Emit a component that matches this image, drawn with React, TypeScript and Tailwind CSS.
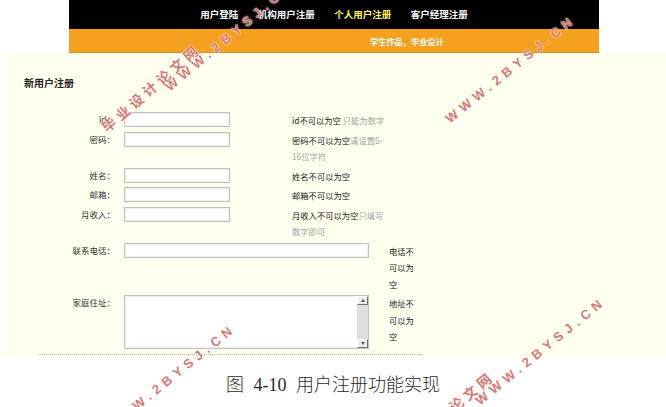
import type { ReactNode } from 'react'

function Hint({ children }: { children: ReactNode }) {
  return <span className="text-[#a3a3a3]">{children}</span>
}

function Box({ wide }: { wide?: boolean }) {
  return (
    <div
      className={`${wide ? 'w-[245px]' : 'w-[106px]'} ml-[9px] h-[15px] shrink-0 border border-[#c2c2c2] bg-white shadow-[inset_0_0_0_1px_#efefef]`}
    />
  )
}

function ScrollBtn({ up }: { up?: boolean }) {
  return (
    <div className="flex h-[9px] items-center justify-center border border-t-white border-l-white border-r-[#707070] border-b-[#707070] bg-[#ececec]">
      <div
        className={`h-0 w-0 border-x-[2.5px] border-x-transparent ${up ? 'border-b-[3px] border-b-[#555]' : 'border-t-[3px] border-t-[#555]'}`}
      />
    </div>
  )
}

const shortRows: { label: string; msg: ReactNode }[] = [
  { label: 'id：', msg: <>id不可以为空 <Hint>只能为数字</Hint></> },
  { label: '密码：', msg: <>密码不可以为空<Hint>请设置6-<br />16位字符</Hint></> },
  { label: '姓名：', msg: '姓名不可以为空' },
  { label: '邮箱：', msg: '邮箱不可以为空' },
  { label: '月收入：', msg: <>月收入不可以为空<Hint>只填写<br />数字即可</Hint></> },
]

const nav = ['用户登陆', '机构用户注册', '个人用户注册', '客户经理注册']

export default function App() {
  return (
    <div className="relative h-[407px] w-[666px] overflow-hidden bg-white font-['Noto_Sans_CJK_SC',sans-serif]">
      {/* header */}
      <div className="ml-[69px] w-[530px]">
        <nav className="flex h-[29px] items-center justify-center gap-[19.5px] bg-black text-[9.5px] font-bold leading-none text-white">
          {nav.map(n => (
            <span key={n} className={n === '个人用户注册' ? 'text-[#ffff4a]' : ''}>{n}</span>
          ))}
        </nav>
        <div className="flex h-[24px] items-center border-b border-[#dc8d1b] bg-[#f5a01f] pl-[301px] pt-[2px] text-[8.2px] font-bold leading-none text-white">
          学生作品，毕业设计
        </div>
      </div>

      {/* form panel */}
      <div className="ml-[3px] bg-[#fffff0] pb-[2px] pl-[21px] pt-[23px] text-[#333]">
        <h2 className="text-[10px] font-bold leading-[14px] text-[#222]">新用户注册</h2>

        <div className="mt-[22px] flex flex-col gap-[3px]">
          {shortRows.map(r => (
            <div key={r.label} className="flex items-start">
              <span className="w-[91px] shrink-0 text-right text-[8.5px] leading-[15px]">{r.label}</span>
              <Box />
              <p className="ml-[62px] whitespace-nowrap text-[8.3px] leading-[16.5px] text-[#222]">{r.msg}</p>
            </div>
          ))}

          <div className="flex items-start">
            <span className="w-[91px] shrink-0 text-right text-[8.5px] leading-[15px]">联系电话：</span>
            <Box wide />
            <p className="ml-[20px] w-[26px] text-[8.3px] leading-[16.5px] text-[#222]">电话不可以为空</p>
          </div>

          <div className="flex items-start">
            <span className="w-[91px] shrink-0 text-right text-[8.5px] leading-[15px]">家庭住址：</span>
            <div className="ml-[9px] flex h-[54px] w-[245px] shrink-0 border border-[#c2c2c2] bg-white shadow-[inset_0_0_0_1px_#efefef]">
              <div className="flex-1" />
              <div className="flex w-[11px] flex-col bg-[#dedede]">
                <ScrollBtn up />
                <div className="flex-1" />
                <ScrollBtn />
              </div>
            </div>
            <p className="ml-[20px] w-[26px] text-[8.3px] leading-[16.5px] text-[#222]">地址不可以为空</p>
          </div>
        </div>

        <div className="ml-[14px] mt-[5px] w-[383px] border-t border-dotted border-[#bdbdbd]" />
      </div>

      {/* caption */}
      <p className="mt-[16px] text-center font-['Liberation_Serif','Noto_Sans_CJK_SC',serif] text-[18px] font-light leading-[24px] text-[#2b2b2b] [word-spacing:5px]">
        图 4-10 用户注册功能实现
      </p>

      {/* watermarks */}
      <span className="pointer-events-none absolute left-[108px] top-[120px] origin-bottom-left rotate-[-41deg] whitespace-nowrap text-[14px] font-bold leading-[14px] tracking-[4px] text-[#c83a32]/70 [text-shadow:0_0_1px_#fff,0_0_2px_#fff]">
        毕业设计论文网
      </span>
      <span className="pointer-events-none absolute left-[172px] top-[80px] origin-bottom-left rotate-[-40deg] whitespace-nowrap font-['Liberation_Sans',sans-serif] text-[13px] font-bold leading-[14px] tracking-[5px] text-[#c83a32]/70 [text-shadow:0_0_1px_#fff,0_0_2px_#fff]">
        WWW.2BYSJ.CN
      </span>
      <span className="pointer-events-none absolute left-[452px] top-[112px] origin-bottom-left rotate-[-39deg] whitespace-nowrap font-['Liberation_Sans',sans-serif] text-[13px] font-bold leading-[14px] tracking-[5px] text-[#c83a32]/70 [text-shadow:0_0_1px_#fff,0_0_2px_#fff]">
        WWW.2BYSJ.CN
      </span>
      <span className="pointer-events-none absolute left-[112px] top-[421px] origin-bottom-left rotate-[-39deg] whitespace-nowrap font-['Liberation_Sans',sans-serif] text-[13px] font-bold leading-[14px] tracking-[5px] text-[#c83a32]/70 [text-shadow:0_0_1px_#fff,0_0_2px_#fff]">
        WWW.2BYSJ.CN
      </span>
      <span className="pointer-events-none absolute left-[400px] top-[446px] origin-bottom-left rotate-[-40deg] whitespace-nowrap text-[14px] font-bold leading-[14px] tracking-[4px] text-[#c83a32]/70 [text-shadow:0_0_1px_#fff,0_0_2px_#fff]">
        毕业设计论文网
      </span>
      <span className="pointer-events-none absolute left-[482px] top-[394px] origin-bottom-left rotate-[-39deg] whitespace-nowrap font-['Liberation_Sans',sans-serif] text-[13px] font-bold leading-[14px] tracking-[5px] text-[#c83a32]/70 [text-shadow:0_0_1px_#fff,0_0_2px_#fff]">
        WWW.2BYSJ.CN
      </span>
    </div>
  )
}
